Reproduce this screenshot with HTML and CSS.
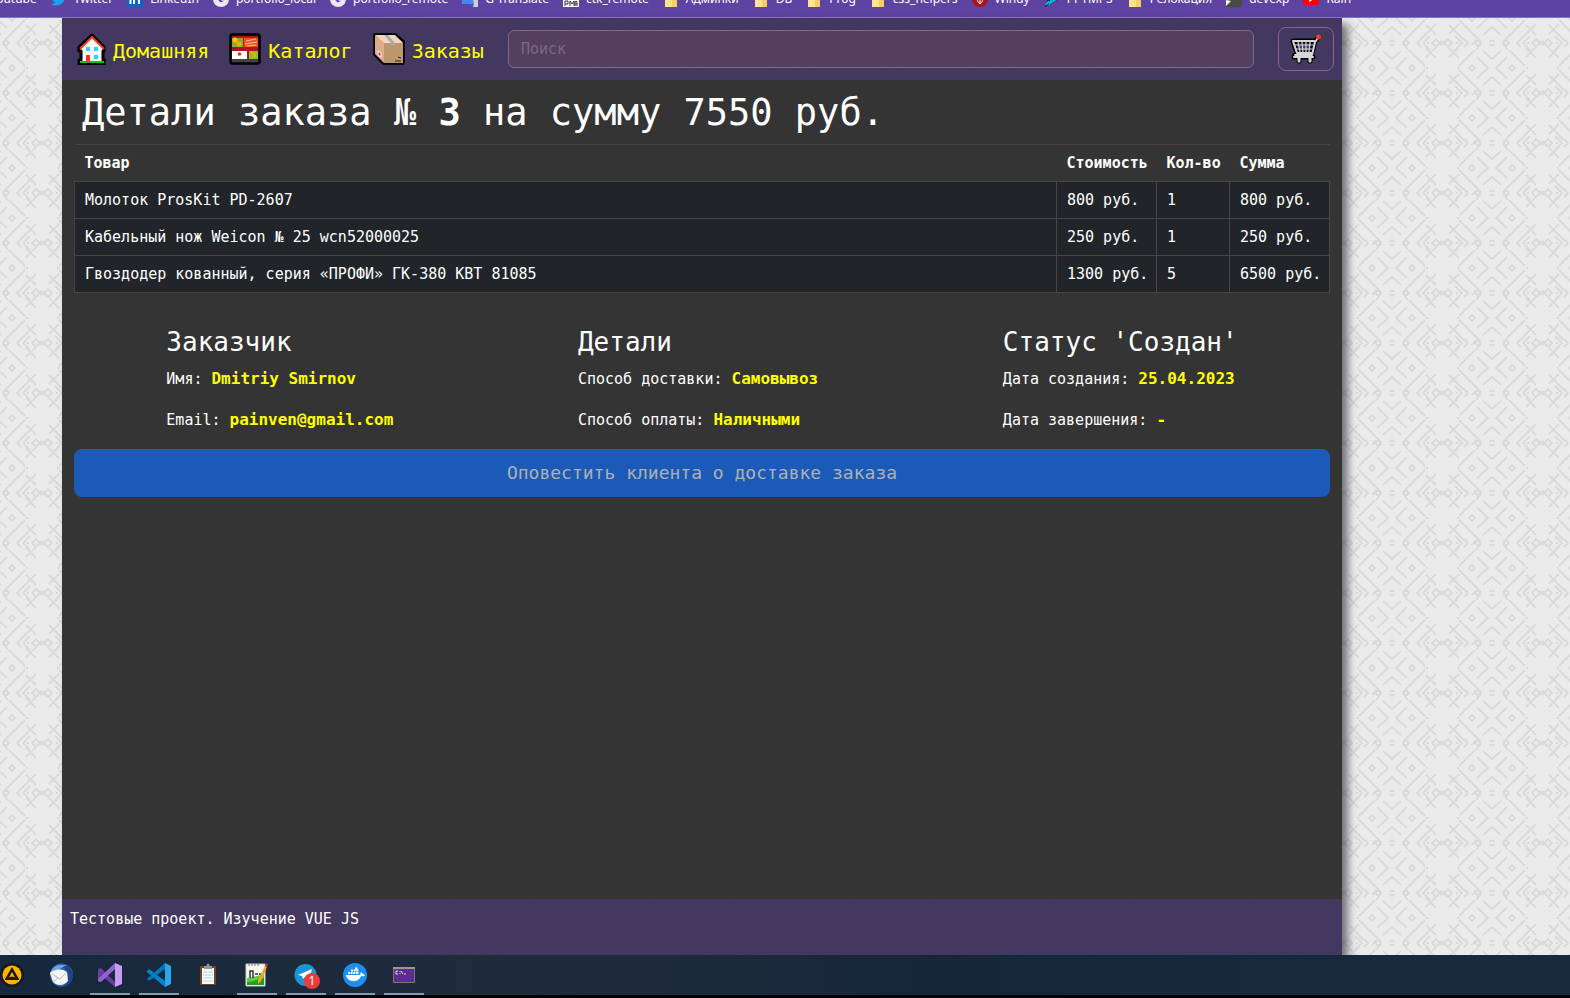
FILE: index.html
```html
<!DOCTYPE html>
<html lang="ru">
<head>
<meta charset="utf-8">
<title>Детали заказа</title>
<link rel="stylesheet" href="styles.css">
</head>
<body>
<nav class="bookmarks" aria-label="Закладки">
  <a class="bookmark" href="#"><svg viewBox="0 0 16 16"><rect y="2" width="16" height="12" rx="3" fill="#f00"/><path d="M6 5l5 3-5 3z" fill="#fff"/></svg>Youtube</a>
  <a class="bookmark" href="#"><svg viewBox="0 0 16 16"><path d="M16 3.500l-1.700 1.300C14.300 10 10.500 14.500 5 14.500c-2 0-3.600-.5-5-1.500 1.800.1 3.400-.4 4.600-1.400C3.200 11.400 2 10.500 1.700 9.300h1.200C1.500 8.700.6 7.500.6 6l1.400.4C.7 5.300.3 3.600 1.100 2 2.800 4 5.100 5.300 7.800 5.400 7.200 2.800 9 1 11 1c1 0 1.800.4 2.400 1l2-.8z" fill="#1da1f2"/></svg>Twitter</a>
  <a class="bookmark" href="#"><svg viewBox="0 0 16 16"><rect width="16" height="16" rx="2" fill="#0a66c2"/><path d="M3.500 6v7M3.500 3v1.500M7 13V6M7 9c0-3 5-3 5 0v4" fill="none" stroke="#fff" stroke-width="2"/></svg>LinkedIn</a>
  <a class="bookmark" href="#"><svg viewBox="0 0 16 16"><circle cx="8" cy="8" r="8" fill="#ebe8f3"/><path d="M5 1c6 0 9 4 5 6-1 2-2 2-1 3 2 0 2-2 3-4-1 4-3 6-5 5-1-2-4-3-6-3z" fill="#5c43a0"/></svg>portfolio_local</a>
  <a class="bookmark" href="#"><svg viewBox="0 0 16 16"><circle cx="8" cy="8" r="8" fill="#ebe8f3"/><path d="M5 1c6 0 9 4 5 6-1 2-2 2-1 3 2 0 2-2 3-4-1 4-3 6-5 5-1-2-4-3-6-3z" fill="#5c43a0"/></svg>portfolio_remote</a>
  <a class="bookmark" href="#"><svg viewBox="0 0 16 16"><path d="M7 4h9v12h-5z" fill="#ccd0d6"/><path d="M0 0h9l3 13H0z" fill="#4486f4"/><path d="M8 13h4l-1 3z" fill="#3267c8"/></svg>G-Translate</a>
  <a class="bookmark" href="#"><svg viewBox="0 0 16 16"><rect width="16" height="16" fill="#fff"/><path d="M1 6h5l1-4 2 4h6v3H1z" fill="#f7931e"/><path d="M2 15v-5h3v3H2M7 15v-5l2 3 2-3v5M12 15v-4l1-1 1 1v4M12 13h2" fill="none" stroke="#333"/></svg>ctk_remote</a>
  <a class="bookmark" href="#"><svg viewBox="0 0 16 16"><path d="M2 0h5l2 2h5v14H2z" fill="#ffe391"/><path d="M9 9h5v7H9z" fill="#f4ce62"/></svg>Админки</a>
  <a class="bookmark" href="#"><svg viewBox="0 0 16 16"><path d="M2 0h5l2 2h5v14H2z" fill="#ffe391"/><path d="M9 9h5v7H9z" fill="#f4ce62"/></svg>DB</a>
  <a class="bookmark" href="#"><svg viewBox="0 0 16 16"><path d="M2 0h5l2 2h5v14H2z" fill="#ffe391"/><path d="M9 9h5v7H9z" fill="#f4ce62"/></svg>Prog</a>
  <a class="bookmark" href="#"><svg viewBox="0 0 16 16"><path d="M2 0h5l2 2h5v14H2z" fill="#ffe391"/><path d="M9 9h5v7H9z" fill="#f4ce62"/></svg>css_helpers</a>
  <a class="bookmark" href="#"><svg viewBox="0 0 16 16"><circle cx="8" cy="8" r="8" fill="#a51521"/><path d="M5 5c0 10 6 10 6 0M8 5v8" fill="none" stroke="#fff"/></svg>Windy</a>
  <a class="bookmark" href="#"><svg viewBox="0 0 16 16"><path d="M1 0l14 8-14 8 3-8z" fill="#111"/><path d="M3 1l11 6-8 5 2-5M2 14l3-4" fill="none" stroke="#0ab4e8" stroke-width="2"/></svg>PPTMPS</a>
  <a class="bookmark" href="#"><svg viewBox="0 0 16 16"><path d="M2 0h5l2 2h5v14H2z" fill="#ffe391"/><path d="M9 9h5v7H9z" fill="#f4ce62"/></svg>Релокация</a>
  <a class="bookmark" href="#"><svg viewBox="0 0 16 16"><rect width="16" height="16" fill="#4a4a4a"/><path d="M0 15V9l5 1z" fill="#fff"/></svg>devexp</a>
  <a class="bookmark" href="#"><svg viewBox="0 0 16 16"><rect y="2" width="16" height="12" rx="3" fill="#f00"/><path d="M6 5l5 3-5 3z" fill="#fff"/></svg>Rain</a>
</nav>

<div class="app">
  <header class="header">
    <nav class="menu">
      <a class="menu-link" href="#"><svg viewBox="0 0 32 32"><path d="M18 2l12 12v4h-1v9h2v4H5v-4h2v-9H5v-4z" fill="#f4f7fa" stroke="#000" stroke-width="3" stroke-linejoin="round"/><path d="M9 15l9-9 9 9v13H9z" fill="#f7f9fb"/><path d="M6 16L18 4l12 12" fill="none" stroke="#f43b1c" stroke-width="2"/><path d="M12 14h4v4h-4zM20 14h4v4h-4zM20 22h4v4h-4z" fill="#2bd2ff"/><path d="M12 22h4v7h-4z" fill="#f03a17"/><path d="M6 28h6v2H6zM16 28h14v2H16z" fill="#12c912"/></svg>Домашняя</a>
      <a class="menu-link" href="#"><svg viewBox="0 0 32 32"><rect x="1.500" y="1.500" width="29" height="29" rx="2" fill="#3e4145" stroke="#000" stroke-width="2.500"/><path d="M3 3h26v12H3z" fill="#b31224"/><path d="M3 5h11v9H3z" fill="#83b51b"/><circle cx="6" cy="7" r="2.500" fill="#ffc400"/><circle cx="10" cy="11" r="2.500" fill="#f8a913"/><path d="M15 5h14v9H15z" fill="#f1511b"/><path d="M17 8l10-2M16 11l12-2M18 13l9-1" stroke="#ffc09a"/><path d="M3 15h26v12H3z" fill="#b31224"/><path d="M3 18h15v8H3z" fill="#fff"/><circle cx="10.500" cy="21" r="1.800" fill="#f12b16"/><path d="M20 18h9v8h-9z" fill="#8cc41e"/><path d="M22 20l4 1M24 24l3-2" stroke="#f9a91e" stroke-width="2"/><path d="M3 26h26v3H3z" fill="#3e4145"/></svg>Каталог</a>
      <a class="menu-link" href="#"><svg viewBox="0 0 32 32"><path d="M1.500 1.500h21l8 7v22h-20l-9-9z" fill="#c29a72" stroke="#000" stroke-width="2.500" stroke-linejoin="round"/><path d="M2 2h20l8 8H11z" fill="#f6d5bd"/><path d="M2 2l9 8v20l-9-9z" fill="#d9ad8b"/><path d="M11 10h19v20H11z" fill="#be966f"/><path d="M11 2h4l7 8v3l-4-2v-1z" fill="#a9adb2"/><path d="M5 18l3 2v4l-3-2z" fill="#f21d33" stroke="#fff"/><path d="M25 24l3 1M22 28h6" stroke="#222"/></svg>Заказы</a>
    </nav>
    <input class="search" type="search" placeholder="Поиск" aria-label="Поиск">
    <button class="cart" type="button" aria-label="Корзина"><svg viewBox="0 0 32 32"><g fill="none" stroke-linecap="round" stroke-linejoin="round"><g stroke="#000" stroke-width="5"><path d="M3 8h22l-3 12H7zM28 5l-4 4-3 13H5M4 24h19"/><path d="M9 25v3M20 25v3"/></g><g stroke="#d5d8d9" stroke-width="2"><path d="M28 5l-3 4-3 13H5M3 8h21M3 8l4 12h15M4 24h19"/><path d="M9 25v3M20 25v3" stroke-width="3"/></g><path d="M5 12h18M6 16h16M8 9l2 10M12 9l1 10M16 9v10M20 9l-1 10" stroke="#d5d8d9" stroke-width="1.200"/></g><circle cx="28.500" cy="4" r="2.500" fill="#f23c20"/></svg></button>
  </header>

  <main class="content">
    <h1 class="title">Детали заказа № <b>3</b> на сумму 7550 руб.</h1>
    <table class="goods">
      <colgroup><col><col class="col-price"><col class="col-count"><col class="col-price"></colgroup>
      <thead>
        <tr><th>Товар</th><th>Стоимость</th><th>Кол-во</th><th>Сумма</th></tr>
      </thead>
      <tbody>
        <tr><td>Молоток ProsKit PD-2607</td><td>800 руб.</td><td>1</td><td>800 руб.</td></tr>
        <tr><td>Кабельный нож Weicon № 25 wcn52000025</td><td>250 руб.</td><td>1</td><td>250 руб.</td></tr>
        <tr><td>Гвоздодер кованный, серия «ПРОФИ» ГК-380 КВТ 81085</td><td>1300 руб.</td><td>5</td><td>6500 руб.</td></tr>
      </tbody>
    </table>
    <div class="info">
      <section>
        <h2>Заказчик</h2>
        <p>Имя: <b>Dmitriy Smirnov</b></p>
        <p>Email: <b>painven@gmail.com</b></p>
      </section>
      <section>
        <h2>Детали</h2>
        <p>Способ доставки: <b>Самовывоз</b></p>
        <p>Способ оплаты: <b>Наличными</b></p>
      </section>
      <section>
        <h2>Статус 'Создан'</h2>
        <p>Дата создания: <b>25.04.2023</b></p>
        <p>Дата завершения: <b>-</b></p>
      </section>
    </div>
    <button class="notify" type="button" disabled>Оповестить клиента о доставке заказа</button>
  </main>

  <footer class="footer">Тестовые проект. Изучение VUE JS</footer>
</div>

<div class="taskbar">
  <button class="task" type="button" aria-label="AIMP"><svg viewBox="0 0 24 24"><circle cx="12" cy="12" r="12" fill="#17191b"/><circle cx="12" cy="12" r="9.500" fill="#fdb400"/><path d="M4.500 17L12 4l7.500 13z" fill="#17191b"/><path d="M12 9l3 5.500-3-1-3 1z" fill="#fdb400"/></svg></button>
  <button class="task" type="button" aria-label="Thunderbird"><svg viewBox="0 0 24 24"><circle cx="12.500" cy="12" r="11.500" fill="#2f66b5"/><path d="M12 1c7 0 12 5 12 11 0 7-5 12-11 12 5-4 7-8 6-14z" fill="#1f4588"/><path d="M1 11C3 3 11 0 18 3c-4 0-6 2-8 4z" fill="#6da5dc"/><path d="M1 10c4-4 12-5 17-1l1 9c-4 5-11 5-15 1z" fill="#f5f4f0"/><path d="M3 11l8 5 7-7M4 19l5-4" fill="none" stroke="#b8bec4"/></svg></button>
  <button class="task is-open" type="button" aria-label="Visual Studio"><svg viewBox="0 0 24 24"><path d="M0 6l3-1 14 14v5L3 12v7l-3-1z" fill="#6b3d9b"/><path d="M0 18l3 1L17 6V0L0 16z" fill="#9264c9"/><path d="M17 0l7 3v18l-7 3z" fill="#c89af5"/><path d="M17 7v10l-6-5z" fill="#182a3e"/></svg></button>
  <button class="task is-open" type="button" aria-label="Visual Studio Code"><svg viewBox="0 0 24 24"><path d="M0 8l2-2 16 12v6L0 9z" fill="#0084cc"/><path d="M0 16L18 0v6L2 18z" fill="#0079bd"/><path d="M18 0l6 3v18l-6 3z" fill="#27a7ec"/><path d="M18 7v10l-7-5z" fill="#182a3e"/></svg></button>
  <button class="task" type="button" aria-label="Буфер обмена"><svg viewBox="0 0 24 24"><rect x="4" y="3" width="16" height="19" fill="#704525"/><path d="M6 5h12v16H6z" fill="#f7fbff"/><path d="M7 9h10M7 12h10M7 15h10M7 18h10" stroke="#bcd3e3"/><path d="M8 6V3h2l2-3 2 3h2v3z" fill="#8e9395"/></svg></button>
  <button class="task is-open" type="button" aria-label="Notepad++"><svg viewBox="0 0 24 24"><path d="M1 1h19v22H1z" fill="#f4f7f1"/><path d="M2 15c6-1 11-2 17-4v11H2z" fill="#5fcb3a"/><path d="M2 19c6 0 11-3 17-4v7H2z" fill="#289c23"/><path d="M1 1h19v22H1z" fill="none" stroke="#c6ceca"/><path d="M4 0v3M7 0v3M10 0v3M13 0v3" stroke="#777"/><path d="M5 15V8h3v7M10 11h3M14 11h2" fill="none" stroke="#333" stroke-width="1.500"/><path d="M20 3l2 1-6 14-3 3v-4z" fill="#f3a51f"/><path d="M21 0l2 1-1 3-2-1z" fill="#c73934"/></svg></button>
  <button class="task is-open" type="button" aria-label="Telegram"><svg viewBox="0 0 24 24"><circle cx="11.500" cy="12" r="11" fill="#1e95d3"/><path d="M4 12l14-6-3 11-4-3-2 2-1-3z" fill="#fff"/></svg><span class="badge">1</span></button>
  <button class="task is-open" type="button" aria-label="Docker"><svg viewBox="0 0 24 24"><circle cx="12" cy="12" r="12" fill="#1d8fee"/><path d="M3 12h14c1-1 0-2 1-3l2 2 2 1c-1 2-3 1-4 1-2 7-14 7-15-1z" fill="#fff"/><path d="M5 10h11M8 7.500h8M12 5.500h3" stroke="#fff" stroke-width="1.800" stroke-dasharray="2 .6"/></svg></button>
  <button class="task is-open" type="button" aria-label="Терминал"><svg viewBox="0 0 24 24"><rect x="1.500" y="4.500" width="21" height="15" fill="#5c2d91" stroke="#777"/><path d="M1 5h22" stroke="#999" stroke-width="2"/><path d="M6 8H4v3h2M8 8v1m0 1v1M9 8l2 3M12 11h2" fill="none" stroke="#ddd"/></svg></button>
</div>
</body>
</html>
```

FILE: styles.css
```css
* { box-sizing: border-box; }

body {
  margin: 0;
  min-height: 100vh;
  display: flex;
  flex-direction: column;
  overflow-x: hidden;
  font: 15px/24px "DejaVu Sans Mono", monospace;
  color: #fff;
  background-color: #ebebeb;
  background-position: 42px 0;
  background-image: url("data:image/svg+xml,%3Csvg xmlns='http://www.w3.org/2000/svg' width='100' height='50' fill='none' stroke='%23d9d9d9' stroke-width='1.800'%3E%3Cpath d='M41 1l9 8 9-8M41 35l9-8 9 8M35 7l11 11-11 10M65 7L54 18l11 10M17 16L34 -1M17 20l22 22M83 16L66 -1M83 20L61 42M39 44l-5 6M34 40l-4 5M61 44l5 6M36 40l3 3-3 3-3-3zM64 40l3 3-3 3-3-3zM30 15l3 3-3 3-3-3zM70 15l3 3-3 3-3-3z'/%3E%3Cpath d='M84 25l10 10M94 24l-15 15M84 48l10 10M94 47L79 62M84 -2L94 8M94 -3L84 7M7 25l15 15M17 24L7 34M7 48l10 10M17 47L7 57M7 -2l10 10M17 -3L7 7M79 39l-4 4 4 4M88 36l-7 7 7 7M13 36l7 7-7 7M22 39l4 4-4 4M94 39l4 4-4 4-4-4zM6 39l4 4-4 4-4-4zM98 41l4 4M98 45l4-4M-2 41l4 4M-2 45l4-4'/%3E%3Cpath d='M48 42c0-2 4-2 4 0M48 44c0 2 4 2 4 0M85 43h2M14 43h2M84 18h2M15 18h2'/%3E%3C/svg%3E");
}

button, input { font: inherit; color: inherit; }
svg { display: block; flex: none; }
h1, h2, p { margin: 0; font-weight: 400; }

/* Browser bookmarks strip */
.bookmarks {
  display: flex;
  align-items: flex-end;
  gap: 14px;
  height: 18px;
  padding-bottom: 10px;
  margin-left: -33px;
  overflow: hidden;
  background: #5e43a3;
  border-bottom: 1px solid #8a73bd;
}
.bookmark {
  display: flex;
  flex: none;
  align-items: center;
  gap: 7px;
  color: #fff;
  font: 12px/16px "Noto Sans", sans-serif;
  text-decoration: none;
  white-space: nowrap;
}
.bookmark svg { width: 16px; height: 16px; }

/* Shop page */
.app {
  flex: 1;
  display: flex;
  flex-direction: column;
  margin: 0 228px 0 62px;
  box-shadow: 6px 6px 8px rgb(33 37 41 / 60%);
}
.header {
  display: flex;
  align-items: center;
  gap: 24px;
  height: 62px;
  padding: 0 8px 0 12px;
  background: rgb(59 48 88 / 96%);
}
.menu { display: flex; gap: 20px; }
.menu-link {
  display: flex;
  align-items: flex-end;
  gap: 7px;
  color: #ff0;
  font-size: 20px;
  line-height: 28px;
  text-decoration: none;
}
.menu-link svg { width: 32px; height: 32px; }
.search {
  flex: 1;
  min-width: 0;
  height: 38px;
  padding: 6px 12px;
  border: 1px solid #87648a;
  border-radius: 6px;
  background: #533f60;
}
.search::placeholder { color: #796a83; opacity: 1; }
.cart {
  display: grid;
  place-items: center;
  width: 56px;
  height: 44px;
  padding: 0;
  border: 1px solid #87648a;
  border-radius: 8px;
  background: none;
}
.cart svg { width: 32px; height: 32px; }

.content {
  flex: 1;
  padding: 0 12px;
  background: #343434;
}
.title {
  padding: 9px 8px 7px;
  font-size: 37px;
  line-height: 48px;
}
.goods {
  width: 100%;
  table-layout: fixed;
  border-collapse: collapse;
  border-top: 1px solid #4d4040;
  text-align: left;
}
.col-price { width: 100px; }
.col-count { width: 73px; }
.goods th, .goods td { padding: 6px 0 6px 10px; white-space: nowrap; }
.goods td { background: #212529; border: 1px solid #4d4242; }

.info {
  display: flex;
  justify-content: space-around;
  padding-top: 33px;
}
.info h2 { margin-bottom: 9px; font-size: 26px; line-height: 32px; }
.info p { margin-bottom: 17px; }
.info b { color: #ff0; font-size: 16px; }
.notify {
  width: 100%;
  height: 48px;
  border: 0;
  border-radius: 8px;
  background: #1c5ab7;
  color: #aeb0b3;
  font-size: 18px;
}
.footer {
  height: 56px;
  padding: 8px;
  background: rgb(59 48 88 / 96%);
}

/* Desktop taskbar */
.taskbar {
  display: flex;
  gap: 9px;
  height: 43px;
  margin-left: -8px;
  background: linear-gradient(90deg, #15283d, #202c3c 30%, #16273a 60%, #172a3d);
  border-bottom: 3px solid #000;
}
.task {
  position: relative;
  display: grid;
  place-items: center;
  width: 40px;
  padding: 0;
  border: 0;
  background: none;
}
.task svg { width: 24px; height: 24px; }
.is-open { box-shadow: inset 0 -2px #7d9dbd; }
.badge {
  position: absolute;
  right: 6px;
  bottom: 6px;
  width: 16px;
  height: 16px;
  border-radius: 50%;
  background: #ec3b3b;
  font: 12px/16px "Noto Sans", sans-serif;
}
```
